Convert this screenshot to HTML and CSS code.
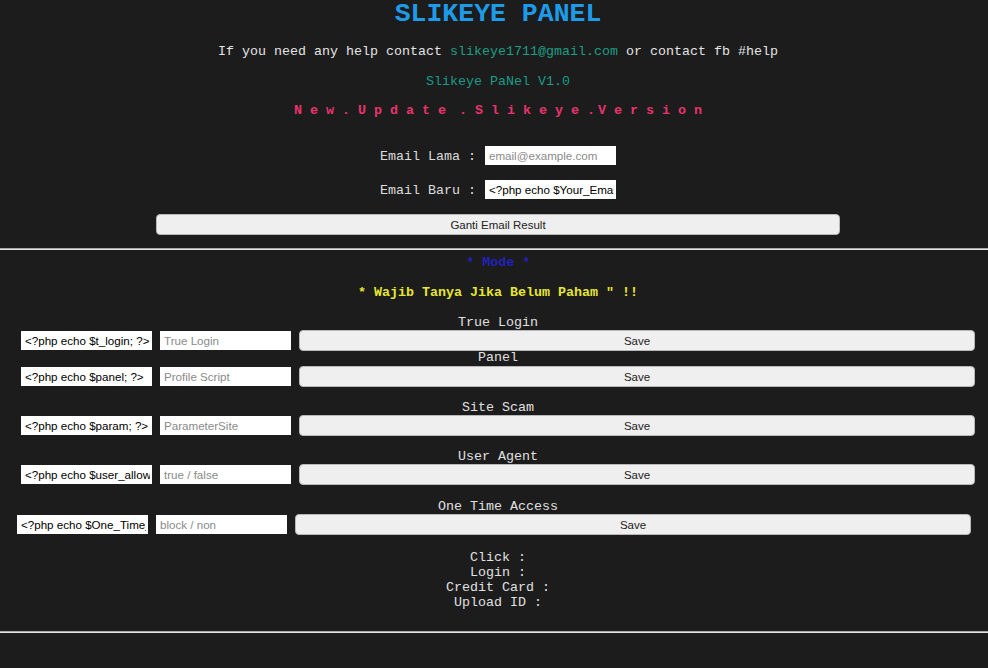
FILE: index.html
```html
<!DOCTYPE html>
<html>
<head>
<meta charset="utf-8">
<title>Slikeye Panel</title>
<link rel="stylesheet" href="styles.css">
</head>
<body>
<div class="wrap">
  <h1 class="title">SLIKEYE PANEL</h1>
  <p class="help">If you need any help contact <a class="mail" href="#">slikeye1711@gmail.com</a> or contact fb #help</p>
  <p class="ver">Slikeye PaNel V1.0</p>
  <p class="upd">New.Update .Slikeye<span class="dot">.</span>Version</p>
  <form class="email-form">
    <div class="field first"><label>Email Lama :</label><input type="text" placeholder="email@example.com"></div>
    <div class="field"><label>Email Baru :</label><input type="text" value="<?php echo $Your_Email; ?>"></div>
    <button type="button" class="btn-email">Ganti Email Result</button>
  </form>
</div>
<hr class="rule">
<div class="wrap">
  <p class="mode"><a href="#">* Mode *</a></p>
  <p class="wajib">* Wajib Tanya Jika Belum Paham " !!</p>

  <div class="lbl l1">True Login</div>
  <div class="row r1"><input type="text" value="<?php echo $t_login; ?>"><input type="text" placeholder="True Login"><button type="button">Save</button></div>

  <div class="lbl l2">Panel</div>
  <div class="row r2"><input type="text" value="<?php echo $panel; ?>"><input type="text" placeholder="Profile Script"><button type="button">Save</button></div>

  <div class="lbl l3">Site Scam</div>
  <div class="row r1"><input type="text" value="<?php echo $param; ?>"><input type="text" placeholder="ParameterSite"><button type="button">Save</button></div>

  <div class="lbl l3">User Agent</div>
  <div class="row r1"><input type="text" value="<?php echo $user_allow; ?>"><input type="text" placeholder="true / false"><button type="button">Save</button></div>

  <div class="lbl l4">One Time Access</div>
  <div class="row r1 shift"><input type="text" value="<?php echo $One_Time_Access; ?>"><input type="text" placeholder="block / non"><button type="button">Save</button></div>

  <div class="stats">
    <div>Click :</div>
    <div>Login :</div>
    <div>Credit Card :</div>
    <div>Upload ID :</div>
  </div>
</div>
<hr class="rule bottom">
</body>
</html>
```
FILE: styles.css
```css
html, body {
  margin: 0;
  padding: 0;
  background: #1c1c1c;
  height: 100%;
}
body {
  font-family: "Liberation Mono", "DejaVu Sans Mono", monospace;
  font-size: 13.33px;
  line-height: 15px;
  color: #e2e2e2;
  overflow: hidden;
}
.wrap {
  padding-left: 8px;
  text-align: center;
}
p { margin: 0; }
.title {
  margin: 1px 0 0;
  font-size: 26.5px;
  line-height: 26px;
  font-weight: bold;
  color: #1e9be8;
  height: 26px;
}
.help {
  margin-top: 17px;
  color: #e4e4e4;
}
.mail {
  color: #1c9e86;
  text-decoration: none;
}
.ver {
  margin-top: 15px;
  color: #1c9a87;
}
.upd {
  margin-top: 14px;
  color: #e8336c;
  font-weight: bold;
  letter-spacing: 8px;
  word-spacing: -11px;
  padding-left: 8px;
}
.upd .dot { letter-spacing: 3px; }
.email-form {
  margin: 0;
  display: flex;
  flex-direction: column;
  align-items: center;
}
.field {
  display: flex;
  align-items: center;
  gap: 9px;
  margin-top: 15px;
  height: 19px;
  color: #dcdcdc;
}
.field label { position: relative; top: 1px; }
.field.first { margin-top: 28px; }
input {
  box-sizing: border-box;
  width: 131px;
  height: 19px;
  margin: 0;
  padding: 0 2px 0 4px;
  border: none;
  background: #fff;
  font-family: "Liberation Sans", Arial, sans-serif;
  font-size: 11.6px;
  color: #000;
  outline: none;
}
input::placeholder { color: #8a8a8a; }
button {
  box-sizing: border-box;
  margin: 0;
  height: 21px;
  border: 1px solid #b8b8b8;
  border-radius: 4px;
  background: #efefef;
  font-family: "Liberation Sans", Arial, sans-serif;
  font-size: 11.5px;
  color: #222;
  padding: 0;
}
.btn-email {
  margin-top: 15px;
  width: 684px;
}
.rule {
  margin: 13px 0 0;
  height: 0;
  border: none;
  border-top: 1px solid #a8a8a8;
  border-bottom: 1px solid #e4e4e4;
}
.rule.bottom { margin-top: 21px; }
.mode {
  margin-top: 5px;
  font-weight: bold;
}
.mode a {
  display: inline-block;
  color: #2222c8;
  text-decoration: none;
  filter: blur(0.7px);
}
.wajib {
  margin-top: 15px;
  color: #e6e632;
  font-weight: bold;
}
.lbl { color: #e0e0e0; }
.l1 { margin-top: 15px; }
.l2 { margin-top: 0; }
.l3 { margin-top: 14px; }
.l4 { margin-top: 15px; }
.row {
  display: flex;
  justify-content: center;
  align-items: center;
  gap: 8px;
  height: 19px;
}
.row.r1 { margin-top: 1px; }
.row.r2 { margin-top: 2px; }
.row.shift { padding-right: 8px; }
.row button { width: 676px; height: 21px; }
.stats {
  margin-top: 16px;
  color: #e0e0e0;
}
```
